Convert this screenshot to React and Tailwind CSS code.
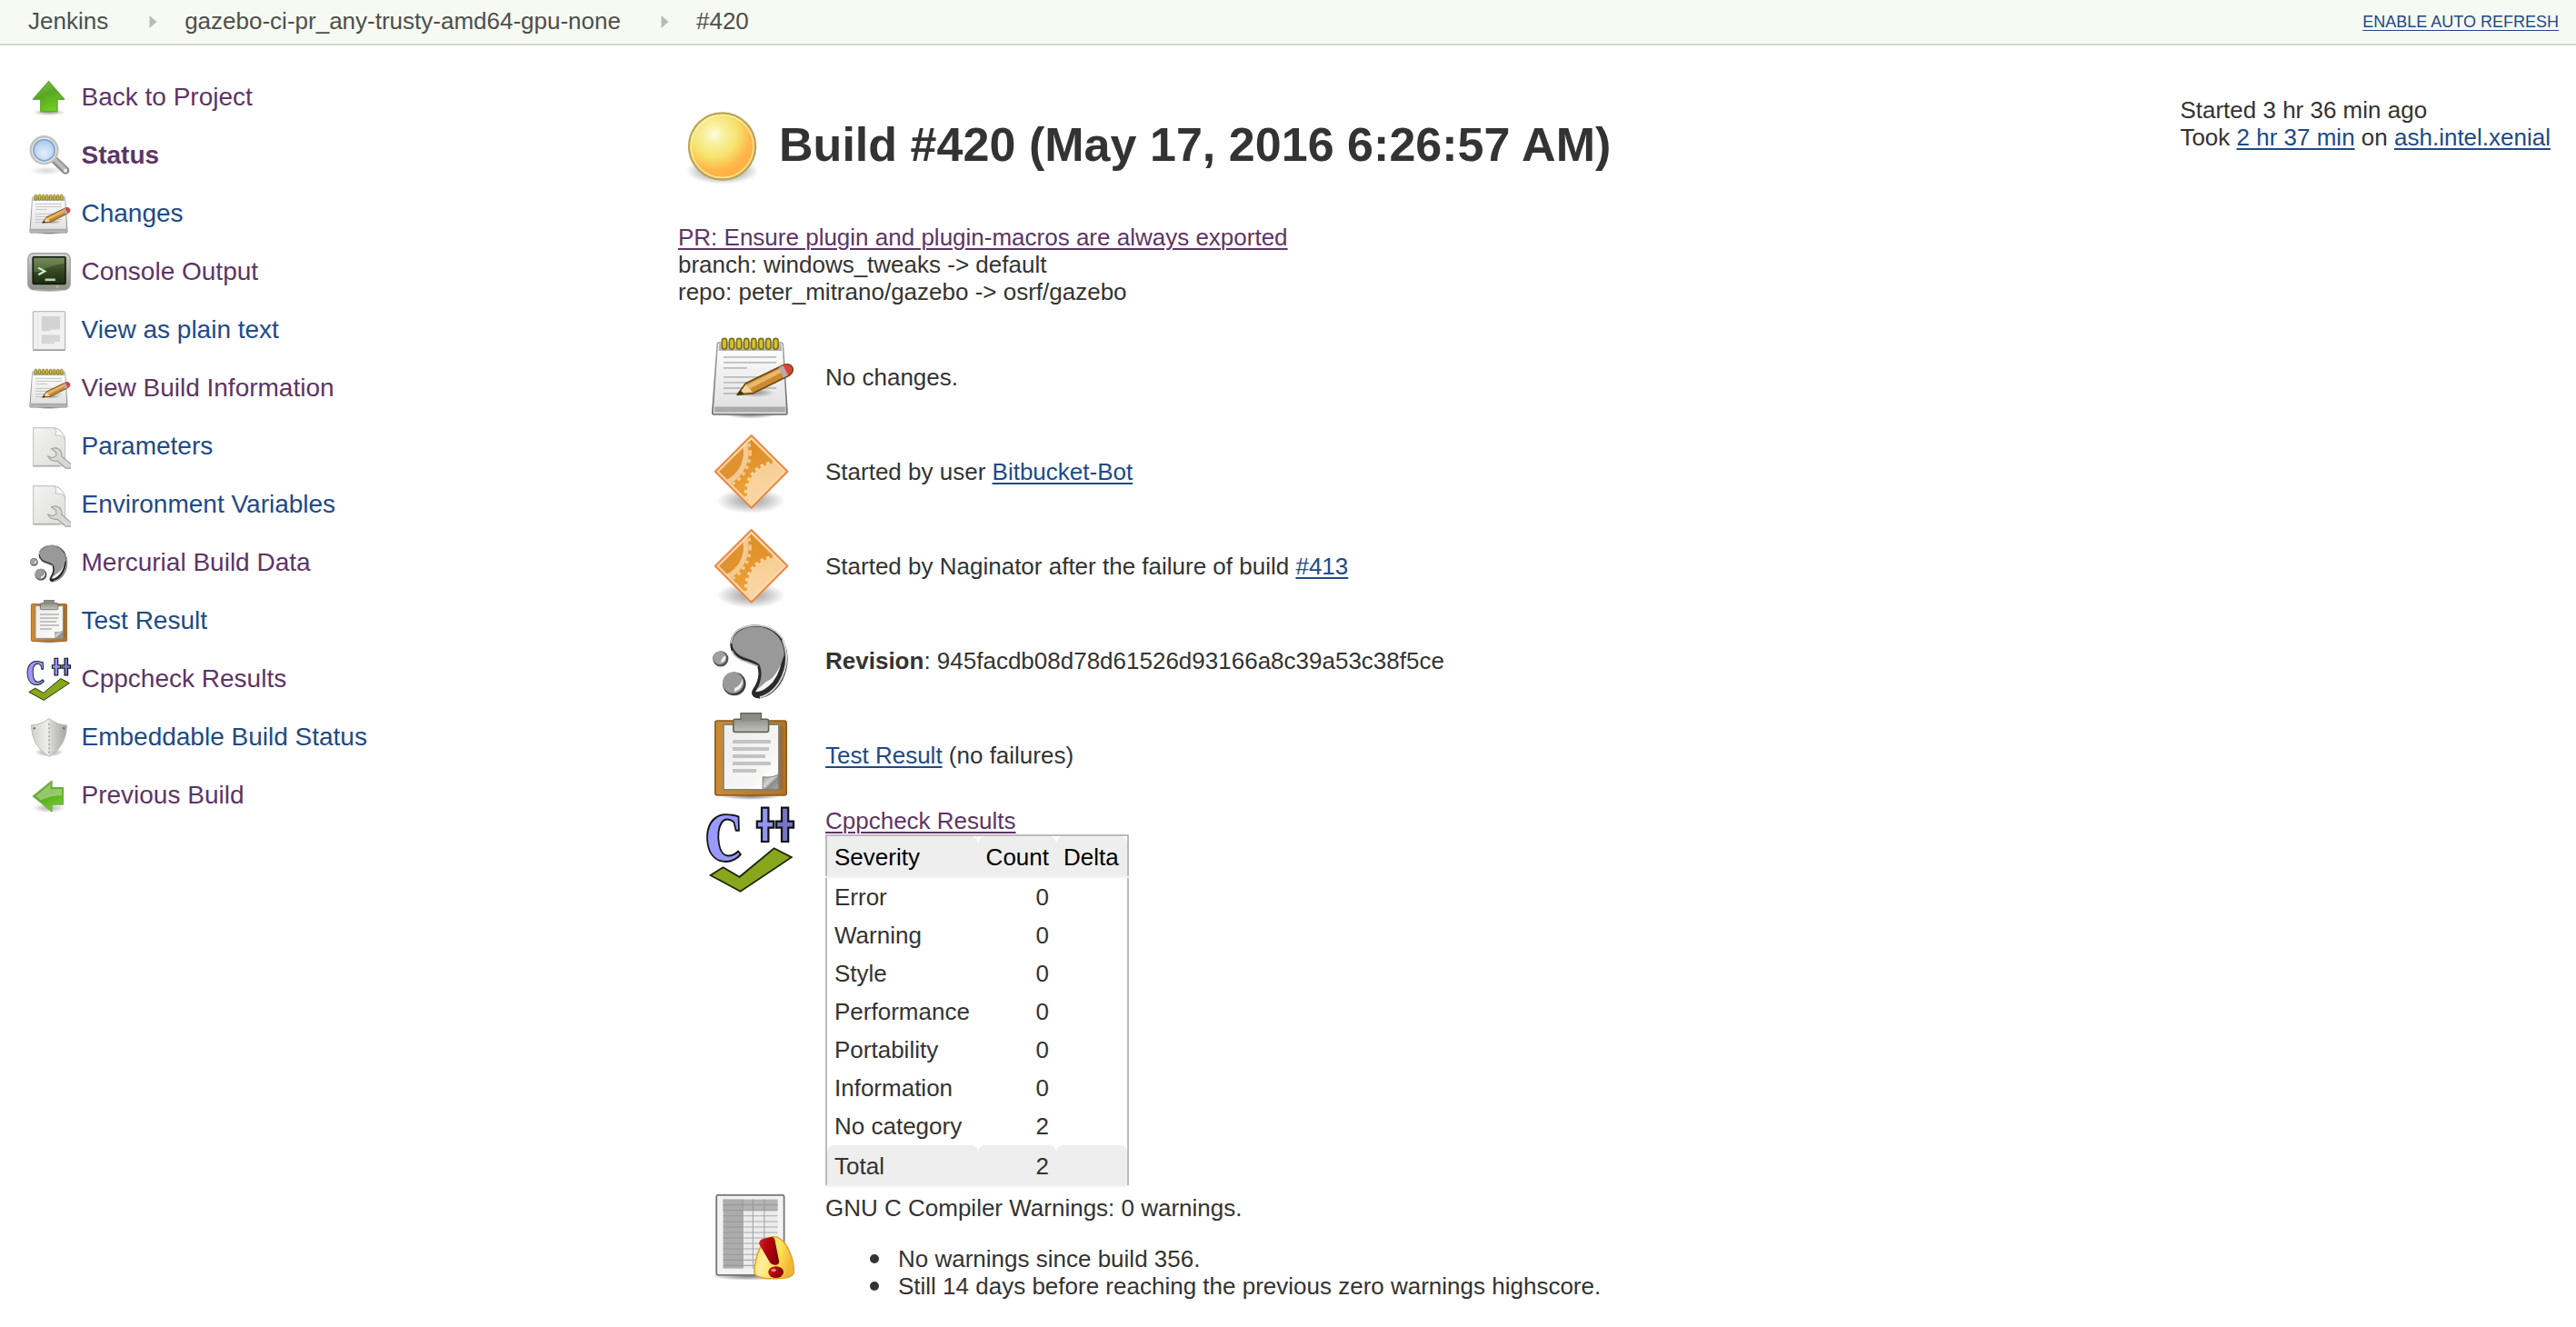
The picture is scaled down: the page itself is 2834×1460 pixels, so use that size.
const BLUE = "text-[#204a87]";
const VISITED = "text-[#5c3566]";

function Defs() {
  return (
    <svg className="absolute h-0 w-0" aria-hidden="true">
      <defs>
        <linearGradient id="green" x1="0" y1="0" x2="0.5" y2="1">
          <stop offset="0" stopColor="#8fc866" />
          <stop offset="0.5" stopColor="#5aa61f" />
          <stop offset="1" stopColor="#6ccd22" />
        </linearGradient>
        <linearGradient id="paper" x1="0" y1="0" x2="0" y2="1">
          <stop offset="0" stopColor="#ffffff" />
          <stop offset="1" stopColor="#dedede" />
        </linearGradient>
        <linearGradient id="edge" x1="0" y1="0" x2="0" y2="1">
          <stop offset="0" stopColor="#a8a8a8" />
          <stop offset="1" stopColor="#666666" />
        </linearGradient>
        <radialGradient id="shadow">
          <stop offset="0" stopColor="#000" stopOpacity="0.5" />
          <stop offset="0.5" stopColor="#000" stopOpacity="0.28" />
          <stop offset="1" stopColor="#000" stopOpacity="0" />
        </radialGradient>
        <radialGradient id="ball" cx="0.38" cy="0.32" r="0.68">
          <stop offset="0" stopColor="#fffbdc" />
          <stop offset="0.22" stopColor="#f9f0a0" />
          <stop offset="0.5" stopColor="#f6e36e" />
          <stop offset="0.8" stopColor="#ffb648" />
          <stop offset="1" stopColor="#ffb040" />
        </radialGradient>
        <radialGradient id="lens" cx="0.5" cy="0.65" r="0.6">
          <stop offset="0" stopColor="#e6f0fa" />
          <stop offset="1" stopColor="#a9c7ea" />
        </radialGradient>
        <linearGradient id="screen" x1="0" y1="0" x2="0" y2="1">
          <stop offset="0" stopColor="#5c7444" />
          <stop offset="0.5" stopColor="#36491f" />
          <stop offset="1" stopColor="#1d2e12" />
        </linearGradient>
        <linearGradient id="case" x1="0" y1="0" x2="0" y2="1">
          <stop offset="0" stopColor="#d0d2cd" />
          <stop offset="1" stopColor="#8d908a" />
        </linearGradient>
        <linearGradient id="page" x1="0" y1="0" x2="1" y2="1">
          <stop offset="0" stopColor="#f3f4f2" />
          <stop offset="1" stopColor="#dcdedb" />
        </linearGradient>
        <linearGradient id="steel" x1="0" y1="0" x2="1" y2="0">
          <stop offset="0" stopColor="#cfd1cc" />
          <stop offset="0.45" stopColor="#efefec" />
          <stop offset="0.55" stopColor="#d5d6d2" />
          <stop offset="1" stopColor="#a3a59f" />
        </linearGradient>
        <linearGradient id="gear" x1="0" y1="0" x2="0" y2="1">
          <stop offset="0" stopColor="#f6cd95" />
          <stop offset="1" stopColor="#ffdcab" />
        </linearGradient>
        <linearGradient id="amber" x1="0" y1="0" x2="0" y2="1">
          <stop offset="0" stopColor="#d98a25" />
          <stop offset="1" stopColor="#f4a63c" />
        </linearGradient>
        <linearGradient id="metal" x1="0" y1="0" x2="0" y2="1">
          <stop offset="0" stopColor="#90928b" />
          <stop offset="1" stopColor="#c4c4b8" />
        </linearGradient>
        <linearGradient id="wood" x1="0" y1="0" x2="1" y2="0">
          <stop offset="0" stopColor="#cb8a35" />
          <stop offset="1" stopColor="#b07428" />
        </linearGradient>
        <linearGradient id="sheet" x1="0" y1="0" x2="1" y2="1">
          <stop offset="0" stopColor="#ededeb" />
          <stop offset="0.7" stopColor="#f6f6f5" />
          <stop offset="0.85" stopColor="#ffffff" />
          <stop offset="1" stopColor="#cccccc" />
        </linearGradient>
        <linearGradient id="curl" x1="0" y1="0" x2="1" y2="1">
          <stop offset="0" stopColor="#8f918d" />
          <stop offset="0.45" stopColor="#d6d7d4" />
          <stop offset="0.6" stopColor="#8b8d88" />
          <stop offset="1" stopColor="#a9aba6" />
        </linearGradient>
        <linearGradient id="bell" x1="0" y1="0" x2="1" y2="0.3">
          <stop offset="0" stopColor="#fbd843" />
          <stop offset="0.35" stopColor="#ffef9e" />
          <stop offset="0.7" stopColor="#ffe14e" />
          <stop offset="1" stopColor="#f0b63a" />
        </linearGradient>
        <linearGradient id="red" x1="0" y1="0" x2="1" y2="0.4">
          <stop offset="0" stopColor="#d0262e" />
          <stop offset="0.5" stopColor="#b4000c" />
          <stop offset="1" stopColor="#84000a" />
        </linearGradient>
        <clipPath id="diamondClip">
          <path d="M24.3 5.6 42.6 23.4 24.3 41.6 6 23.4Z" />
        </clipPath>
      </defs>
    </svg>
  );
}

function Svg({ size = 48, className = "", children }) {
  return (
    <svg viewBox={`0 0 ${size} ${size}`} className={`block shrink-0 ${className}`}>
      {children}
    </svg>
  );
}

function ArrowUp({ className }) {
  return (
    <Svg size={24} className={className}>
      <ellipse cx="12" cy="19.8" rx="9" ry="1.8" fill="url(#shadow)" opacity="0.7" />
      <path d="M11.8 2.8 20.3 12.6H16.5V19.4H7.4V12.6H3.2Z" fill="url(#green)" stroke="#5fa832" strokeWidth="0.7" strokeLinejoin="round" />
    </Svg>
  );
}

function ArrowLeft({ className }) {
  return (
    <Svg size={24} className={className}>
      <ellipse cx="12" cy="18.5" rx="9" ry="2.6" fill="url(#shadow)" opacity="0.6" />
      <path d="M3.2 12 13.5 3.7V7.3H19.7V16.5H13.5V20.4Z" fill="url(#green)" stroke="#6fb04a" strokeWidth="0.7" strokeLinejoin="round" />
      <path d="M4.6 12 12.8 5.4V8H19V11.5C14 11.8 10 13 7.4 14.2Z" fill="#c9e6b2" opacity="0.5" />
    </Svg>
  );
}

function Magnifier({ className }) {
  return (
    <Svg size={24} className={className}>
      <ellipse cx="10.5" cy="19.9" rx="9.5" ry="2.4" fill="url(#shadow)" opacity="0.3" />
      <path d="M15.2 14.2 21.1 19.8" stroke="#8c8c8c" strokeWidth="4.2" strokeLinecap="round" />
      <path d="M15.2 13.8 20.9 19.4" stroke="#bcbcbc" strokeWidth="2.2" strokeLinecap="round" />
      <circle cx="21" cy="19.9" r="1" fill="#eee" />
      <circle cx="9.3" cy="8.6" r="7.2" fill="none" stroke="#c2c4c0" strokeWidth="1.7" />
      <circle cx="9.3" cy="8.6" r="6.4" fill="url(#lens)" stroke="#f4f4f4" strokeWidth="0.6" />
      <circle cx="9.3" cy="8.6" r="5.8" fill="none" stroke="#7fa3d3" strokeWidth="0.9" />
    </Svg>
  );
}

function Notepad({ className }) {
  return (
    <Svg className={className}>
      <ellipse cx="24" cy="43.6" rx="15" ry="2.8" fill="url(#shadow)" />
      <path d="M6.9 4.4H40.4Q41.6 4.4 41.7 5.6L44 43Q44 44 43 44H3.8Q2.8 44 2.9 43L5.6 5.6Q5.7 4.4 6.9 4.4Z" fill="url(#paper)" stroke="url(#edge)" strokeWidth="0.8" />
      <path d="M6.6 4.9H40.7L41.1 9H6.3Z" fill="#9c9c98" opacity="0.75" />
      <path d="M4 39.8H43.2V42.8H4Z" fill="#ababab" />
      {[0, 1, 2, 3, 4, 5, 6, 7].map((i) => (
        <rect key={i} x={8.2 + i * 4.03} y="2.2" width="2.6" height="5.9" rx="1.3" fill="#d8c22e" stroke="#7d6f18" strokeWidth="0.8" />
      ))}
      <path
        d="M9 12.4H38M9 15.4H38M9 18.4H22M9 23.4H38M9 26.4H38M9 29.5H38M9 32.5H26"
        stroke="#bdbdbd"
        strokeWidth="0.9"
      />
      <ellipse cx="27" cy="32" rx="10" ry="2.6" fill="url(#shadow)" opacity="0.7" />
      <path d="M16.6 33.2 21.2 26.9 41.8 16.9Q45.5 15.6 46.9 18.3 47.6 20.8 45 22.6L25.2 32.4Z" fill="#c98a32" stroke="#6f4a16" strokeWidth="0.9" strokeLinejoin="round" />
      <path d="M22 27.8 40.8 18.4 41.9 20.4 23.6 29.7Z" fill="#eab765" />
      <path d="M17.8 32.3 21.4 27.4 25 31.7Z" fill="#ecd6a0" />
      <path d="M16.4 33.3 18.3 30.7 20.3 32.6Z" fill="#3c3220" />
      <path d="M39.4 18.2 41.8 17 44.4 22.4 41.9 23.7Z" fill="#b9a9ae" />
      <path d="M41.8 17Q45.2 15.9 46.4 18.5 47 20.6 44.6 22.2Z" fill="#e63a3f" />
    </Svg>
  );
}

function Console({ className }) {
  return (
    <Svg size={24} className={className}>
      <ellipse cx="12" cy="21.4" rx="11" ry="1.3" fill="url(#shadow)" />
      <rect x="0.4" y="1.3" width="23.2" height="20" rx="3" fill="url(#case)" stroke="#9b9d98" strokeWidth="0.6" />
      <rect x="3.1" y="3.4" width="17.9" height="14.8" rx="0.6" fill="url(#screen)" stroke="#15180f" strokeWidth="0.8" />
      <path d="M3.7 4H20.4V7Q12 8 7 11.5L3.7 11.8Z" fill="#b9cf9c" opacity="0.25" />
      <path d="M6.1 9.3 9.6 11.2 6.1 13.1" fill="none" stroke="#d3ecd0" strokeWidth="1.1" />
      <path d="M9.8 15.9H15.4" stroke="#b5d8b0" strokeWidth="1.3" />
      <circle cx="16.5" cy="19.7" r="0.6" fill="#9fe04d" />
    </Svg>
  );
}

function PlainText({ className }) {
  return (
    <Svg size={24} className={className}>
      <rect x="3.2" y="1.3" width="17.6" height="21.2" rx="0.6" fill="#f1f1f1" stroke="#bdbdbd" strokeWidth="0.7" />
      <path d="M3.2 22.6H20.8" stroke="#9e9e9e" strokeWidth="0.7" />
      <path d="M5.7 2V22" stroke="#e2e2e2" strokeWidth="0.4" />
      <path d="M7.9 4H18V11.3H12.6V12.1H7.9Z" fill="#d3d3d3" />
      <path d="M7.9 14.2H18V18H15V19.1H7.9Z" fill="#d6d6d6" />
    </Svg>
  );
}

function PageWrench({ className }) {
  return (
    <Svg size={24} className={className}>
      <path d="M3.3 1.3H14.8Q19.5 2.5 20.8 7.5V22.4H3.3Z" fill="url(#page)" stroke="#c6c8c4" strokeWidth="0.6" />
      <path d="M3.3 22.3H18" stroke="#b0b2ae" strokeWidth="0.8" />
      <path d="M14.8 1.4Q16.6 3 15.6 5.6 19.2 5 20.8 7.6 19.6 2.6 14.8 1.4Z" fill="#fbfbfa" stroke="#c2c4c0" strokeWidth="0.5" />
      <path d="M13.2 12.9Q16.6 11.6 18.4 14.1 19.2 15.6 18.9 17L24.3 21.6V23.6H21.2L16.6 19.6Q12.8 20.2 11.3 16.9L13.6 17.9 15.9 16.9 15.8 14.7Z" fill="#d8d9d5" stroke="#a3a59f" strokeWidth="0.6" strokeLinejoin="round" />
    </Svg>
  );
}

function Mercurial({ className }) {
  const blob =
    "M12.8 13C13.6 7.2 19.6 3.8 26.6 3.8 37 3.8 44.2 11.4 44.3 22 44.4 33 37.6 43 28.8 44.2 25.4 44.2 23.6 42 25 39.4 28 35 29 31 27.6 26.6 25 24.2 18.4 24 15 20.4 12.9 18 12.4 15.6 12.8 13Z";
  return (
    <Svg className={className}>
      <path d={blob} fill="#2a2a2a" />
      <path d="M41.5 12Q46.4 24 39.6 35.4 35.4 42 29 43.6" fill="none" stroke="#d5d5d5" strokeWidth="1" />
      <path d="M13.6 18Q15.6 22.6 22 24.2L28 26.6" fill="none" stroke="#bbb" strokeWidth="0.9" />
      <path d="M41 19Q41.6 28 36 35.4 31 40.8 26.6 40.6L28 38Q36 34 41 19Z" fill="#f4f4f4" />
      <path d="M14 12.6C15 7.6 20.4 4.8 26.6 4.8 35.6 4.8 42.2 11 42.4 20 41 25 38.6 30.6 35 33.6 31.6 35 30 37.4 27.4 39.4 30 34 30.6 29.6 28.6 25.4 25.6 22.6 19 22.4 16 19 14 16.6 13.4 15 14 12.6Z" fill="#999999" />
      <path d="M13.2 14Q13.6 6 23 4.4 35 2.4 41.6 11.6" fill="none" stroke="#c4c4c4" strokeWidth="0.9" />
      <circle cx="7.4" cy="22.4" r="4.3" fill="#555" />
      <circle cx="7" cy="22" r="3.6" fill="#a0a0a0" />
      <path d="M7.4 24.6Q10.4 24 10.2 20.6 8 21.4 7.4 24.6Z" fill="#f4f4f4" />
      <circle cx="14.9" cy="36.2" r="6.4" fill="#3c3c3c" />
      <circle cx="14.3" cy="35.6" r="5.8" fill="#9a9a9a" />
      <path d="M15 40.6Q20 39 19.6 33.4 18 37.6 15 38.6Z" fill="#f0f0f0" />
    </Svg>
  );
}

function Clipboard({ className }) {
  return (
    <Svg className={className}>
      <ellipse cx="24" cy="46" rx="17" ry="2" fill="url(#shadow)" />
      <rect x="4.4" y="4.5" width="39.2" height="41" rx="1.2" fill="url(#wood)" stroke="#8a5a1a" strokeWidth="0.8" />
      <rect x="39.8" y="7.5" width="2" height="35" fill="#8a6a3a" opacity="0.7" />
      <path d="M9 6.6H39.4V42.4H9Z" fill="url(#sheet)" stroke="#80827c" strokeWidth="0.8" />
      <path d="M30.6 35.4Q36 36 39.2 34V42.2H30.6Z" fill="url(#curl)" stroke="#7b7d78" strokeWidth="0.5" />
      <path d="M14 16H35M14 20H34M14 24H32M14 28H35M14 32H27" stroke="#c3c3c3" strokeWidth="1.9" />
      <path d="M18.5 0.3H29.7V4H18.5Z" fill="#82847c" stroke="#62645c" strokeWidth="0.7" />
      <path d="M15.6 3.6H32.8Q33.8 3.6 33.8 4.6V9.6Q33.8 10.7 32.7 10.7H15.5Q14.4 10.7 14.4 9.6V4.6Q14.4 3.6 15.6 3.6Z" fill="url(#metal)" stroke="#62645c" strokeWidth="0.8" />
      <path d="M18.8 1H29.4V4.6H18.8Z" fill="#8b8d85" />
    </Svg>
  );
}

function Cppcheck({ className }) {
  return (
    <Svg className={`overflow-visible ${className}`}>
      <text
        transform="translate(1.2 29.4) skewX(10)"
        fontFamily="'Liberation Serif', serif"
        fontWeight="700"
        fontStyle="italic"
        fontSize="54"
        textLength="21"
        lengthAdjust="spacingAndGlyphs"
        fill="#9999ff"
        stroke="#111"
        strokeWidth="1"
      >
        c
      </text>
      <path d="M30 0.3H33.7V7.8H36.6V11.3H33.7V19H30V11.3H27.4V7.8H30Z" fill="#9494f4" stroke="#111" strokeWidth="1.1" />
      <path d="M41 0.3H44.6V7.8H47.5V11.3H44.6V19H41V11.3H38V7.8H41Z" fill="#7676c4" stroke="#111" strokeWidth="1.1" />
      <path d="M1.8 37.5 8.7 33.1 17.8 38.4 36.8 22.6 46.4 27.6 18.3 46.4Z" fill="#88a61c" stroke="#1c2408" strokeWidth="0.9" />
    </Svg>
  );
}

function Shield({ className }) {
  return (
    <Svg size={24} className={className}>
      <ellipse cx="12" cy="19.8" rx="8" ry="2.6" fill="url(#shadow)" opacity="0.8" />
      <path d="M12 1.3Q16.6 4.8 21.8 5 21.6 16.4 12 22.2 2.4 16.4 2.2 5 7.4 4.8 12 1.3Z" fill="url(#steel)" stroke="#b9bbb5" strokeWidth="0.5" />
      <path d="M12 4V21" stroke="#9a9c95" strokeWidth="0.7" strokeDasharray="0.9 1.3" />
      <circle cx="3.9" cy="6.6" r="0.6" fill="#6f716b" />
      <circle cx="20.1" cy="6.6" r="0.6" fill="#6f716b" />
    </Svg>
  );
}

function Gears({ className }) {
  return (
    <Svg className={className}>
      <ellipse cx="24" cy="39.5" rx="19" ry="7" fill="url(#shadow)" opacity="0.75" />
      <path d="M24.3 3.5 44.2 23.4 24.3 43.4 4.4 23.4Z" fill="#fbd9ae" stroke="#ee8640" strokeWidth="1" strokeLinejoin="round" />
      <g clipPath="url(#diamondClip)">
        <rect width="48" height="48" fill="url(#amber)" />
        <circle cx="3.4" cy="13" r="19.4" fill="#f4ca92" />
        <circle cx="3.4" cy="13" r="20.2" fill="none" stroke="#f4ca92" strokeWidth="1.6" strokeDasharray="1.8 2" />
        <circle cx="3.4" cy="13" r="16.6" fill="#e0922f" />
        <circle cx="38" cy="35" r="16.2" fill="url(#gear)" />
        <circle cx="38" cy="35" r="16.8" fill="none" stroke="#f9d3a0" strokeWidth="1.6" strokeDasharray="1.8 1.7" />
      </g>
      <path d="M24.3 5.4 42.4 23.4 24.3 41.6 6.2 23.4Z" fill="none" stroke="#fce0bc" strokeWidth="0.6" opacity="0.8" />
    </Svg>
  );
}

function Ball({ className }) {
  return (
    <Svg className={className}>
      <ellipse cx="24.3" cy="38" rx="20" ry="7.4" fill="url(#shadow)" />
      <circle cx="24.3" cy="24.5" r="18.3" fill="url(#ball)" stroke="#b9a656" strokeWidth="1.1" />
      <circle cx="24.3" cy="24.5" r="17.2" fill="none" stroke="#fff2b8" strokeWidth="0.8" opacity="0.75" />
    </Svg>
  );
}

function WarningSheet({ className }) {
  return (
    <Svg className={className}>
      <ellipse cx="23" cy="45" rx="21" ry="2.4" fill="url(#shadow)" />
      <rect x="5.1" y="0.4" width="37.2" height="44" rx="1" fill="#f3f3f3" stroke="#777" strokeWidth="0.9" />
      <rect x="8.8" y="2.8" width="30" height="38" fill="#ececec" />
      <rect x="8.8" y="2.8" width="30" height="6" fill="#b4b4b4" />
      <rect x="8.8" y="2.8" width="10.8" height="38" fill="#acacac" />
      <path
        d="M8.8 5.8H38.8M8.8 8.8H38.8M8.8 11.9H38.8M8.8 15H38.8M8.8 18H38.8M8.8 21H38.8M8.8 24H38.8M8.8 27H38.8M8.8 30H38.8M8.8 33.1H38.8M8.8 36.2H38.8M8.8 39.2H38.8M19.6 2.8V40.8M25.2 2.8V40.8M31.4 2.8V40.8"
        stroke="#929292"
        strokeWidth="0.55"
        opacity="0.75"
      />
      <path d="M36 23.4C43 22.6 47.6 35 47.8 42.4 47.6 46 42 46.4 36.6 46.4 30 46.4 25.8 45.2 25.9 42.4 26.6 34 29.6 24.2 36 23.4Z" fill="url(#bell)" stroke="#dfa72e" strokeWidth="0.8" />
      <path d="M28.6 27.4Q28.4 25.2 31 24.4L35 23.5Q36.8 23.2 37.2 25L39.6 37Q39.4 39.4 36.6 38.8 34.8 38.4 34 36.6Z" fill="url(#red)" />
      <ellipse cx="37.8" cy="42.8" rx="4.2" ry="3.2" fill="url(#red)" />
      <ellipse cx="36.6" cy="41.8" rx="1.4" ry="0.9" fill="#f4a0a0" opacity="0.8" />
    </Svg>
  );
}

const tasks = [
  { icon: ArrowUp, label: "Back to Project", color: VISITED },
  { icon: Magnifier, label: "Status", color: VISITED, bold: true },
  { icon: Notepad, label: "Changes", color: BLUE },
  { icon: Console, label: "Console Output", color: VISITED },
  { icon: PlainText, label: "View as plain text", color: BLUE },
  { icon: Notepad, label: "View Build Information", color: VISITED },
  { icon: PageWrench, label: "Parameters", color: BLUE },
  { icon: PageWrench, label: "Environment Variables", color: BLUE },
  { icon: Mercurial, label: "Mercurial Build Data", color: VISITED },
  { icon: Clipboard, label: "Test Result", color: BLUE },
  { icon: Cppcheck, label: "Cppcheck Results", color: VISITED },
  { icon: Shield, label: "Embeddable Build Status", color: BLUE },
  { icon: ArrowLeft, label: "Previous Build", color: VISITED },
];

const severities = [
  ["Error", 0],
  ["Warning", 0],
  ["Style", 0],
  ["Performance", 0],
  ["Portability", 0],
  ["Information", 0],
  ["No category", 2],
];

function Link({ visited, children }) {
  return (
    <a href="#" className={`underline decoration-2 underline-offset-[3px] ${visited ? VISITED : BLUE}`}>
      {children}
    </a>
  );
}

function Chevron() {
  return (
    <svg viewBox="0 0 9 14" className="block h-3.5 w-[9px] shrink-0">
      <path d="M0.5 0 8.5 7 0.5 14Z" fill="#b9bcb6" />
    </svg>
  );
}

function SummaryRow({ icon: Icon, children }) {
  return (
    <div className="flex h-[104px] items-start">
      <Icon className="size-24" />
      <div className="ml-[34px] flex h-24 items-center pb-0.5 whitespace-pre">
        <p>{children}</p>
      </div>
    </div>
  );
}

function CppcheckTable() {
  const grid = "grid grid-cols-[166px_86px_78px]";
  return (
    <div className="w-[334px]">
      <div className="border-x-2 border-t-2 border-[#bbbbbb]">
        <div className={`${grid} h-11 leading-[46px] text-black`}>
          <div className="h-11 rounded-tr-lg bg-[#eeeeee] pl-2">Severity</div>
          <div className="h-11 rounded-t-lg bg-[#eeeeee] pr-2 text-right">Count</div>
          <div className="h-11 rounded-t-lg bg-[#eeeeee] pl-2">Delta</div>
        </div>
      </div>
      <div className="h-0.5 bg-[#f3f3f3]" />
      <div className="border-x-2 border-[#bbbbbb]">
        {severities.map(([name, count]) => (
          <div key={name} className={`${grid} h-[42px] leading-[42px]`}>
            <div className="pl-2">{name}</div>
            <div className="pr-2 text-right">{count}</div>
            <div />
          </div>
        ))}
        <div className={`${grid} h-11 leading-[46px]`}>
          <div className="h-11 rounded-t-lg bg-[#eeeeee] pl-2">Total</div>
          <div className="h-11 rounded-t-lg bg-[#eeeeee] pr-2 text-right">2</div>
          <div className="h-11 rounded-t-lg bg-[#eeeeee]" />
        </div>
      </div>
      <div className="h-0.5 bg-[#f3f3f3]" />
    </div>
  );
}

export default function App() {
  return (
    <div className="h-[1460px] w-[2834px] overflow-hidden bg-white font-['Liberation_Sans',Arial,sans-serif] text-[26px] leading-[30px] text-[#333333]">
      <Defs />
      <header className="flex h-[50px] items-center border-b-2 border-[#d3d7cf] bg-[#f6faf2] pr-[19px] pl-[31px] text-[#4d4f4c]">
        <span className="pb-0.5">Jenkins</span>
        <span className="ml-[45px]">
          <Chevron />
        </span>
        <span className="ml-[30px] pb-0.5">gazebo-ci-pr_any-trusty-amd64-gpu-none</span>
        <span className="ml-[44px]">
          <Chevron />
        </span>
        <span className="ml-[30px] pb-0.5">#420</span>
        <a href="#" className={`ml-auto text-[18px] underline decoration-1 underline-offset-[3px] ${BLUE}`}>
          ENABLE AUTO REFRESH
        </a>
      </header>

      <div className="flex">
        <aside className="flex w-[746px] shrink-0 flex-col gap-4 pt-[34px] pl-[30px] text-[28px]">
          {tasks.map(({ icon: Icon, label, color, bold }) => (
            <a key={label} href="#" className={`flex h-12 items-center ${color}`}>
              <Icon className="size-12" />
              <span className={`ml-[11.5px] pb-0.5 ${bold ? "font-bold" : ""}`}>{label}</span>
            </a>
          ))}
        </aside>

        <main className="flex-1">
          <div className="flex pt-[56px]">
            <div className="flex items-center pt-1.5">
              <Ball className="size-24" />
              <h1 className="ml-[15px] pb-[3px] text-[52px] leading-[60px] font-bold tracking-[0.03px] whitespace-pre">
                Build #420 (May 17, 2016 6:26:57 AM)
              </h1>
            </div>
            <div className="mr-[28px] ml-auto whitespace-pre">
              <p>Started 3 hr 36 min ago</p>
              <p>
                Took <Link>2 hr 37 min</Link> on <Link>ash.intel.xenial</Link>
              </p>
            </div>
          </div>

          <div className="mt-[38px] whitespace-pre">
            <p>
              <Link visited>PR: Ensure plugin and plugin-macros are always exported</Link>
            </p>
            <p>{"branch: windows_tweaks -> default"}</p>
            <p>{"repo: peter_mitrano/gazebo -> osrf/gazebo"}</p>
          </div>

          <div className="mt-8 pl-8">
            <SummaryRow icon={Notepad}>No changes.</SummaryRow>
            <SummaryRow icon={Gears}>
              Started by user <Link>Bitbucket-Bot</Link>
            </SummaryRow>
            <SummaryRow icon={Gears}>
              Started by Naginator after the failure of build <Link>#413</Link>
            </SummaryRow>
            <SummaryRow icon={Mercurial}>
              <b>Revision</b>: 945facdb08d78d61526d93166a8c39a53c38f5ce
            </SummaryRow>
            <SummaryRow icon={Clipboard}>
              <Link>Test Result</Link> (no failures)
            </SummaryRow>
            <div className="flex h-[426px] items-start">
              <Cppcheck className="size-24" />
              <div className="ml-[34px]">
                <p>
                  <Link visited>Cppcheck Results</Link>
                </p>
                <CppcheckTable />
              </div>
            </div>
            <div className="flex items-start">
              <WarningSheet className="size-24" />
              <div className="ml-[34px] whitespace-pre">
                <p>GNU C Compiler Warnings: 0 warnings.</p>
                <ul className="mt-[26px] pl-[49px]">
                  {["No warnings since build 356.", "Still 14 days before reaching the previous zero warnings highscore."].map((line) => (
                    <li key={line} className="flex items-center">
                      <span className="mr-[21px] size-2.5 rounded-full bg-[#333333]" />
                      {line}
                    </li>
                  ))}
                </ul>
              </div>
            </div>
          </div>
        </main>
      </div>
    </div>
  );
}
